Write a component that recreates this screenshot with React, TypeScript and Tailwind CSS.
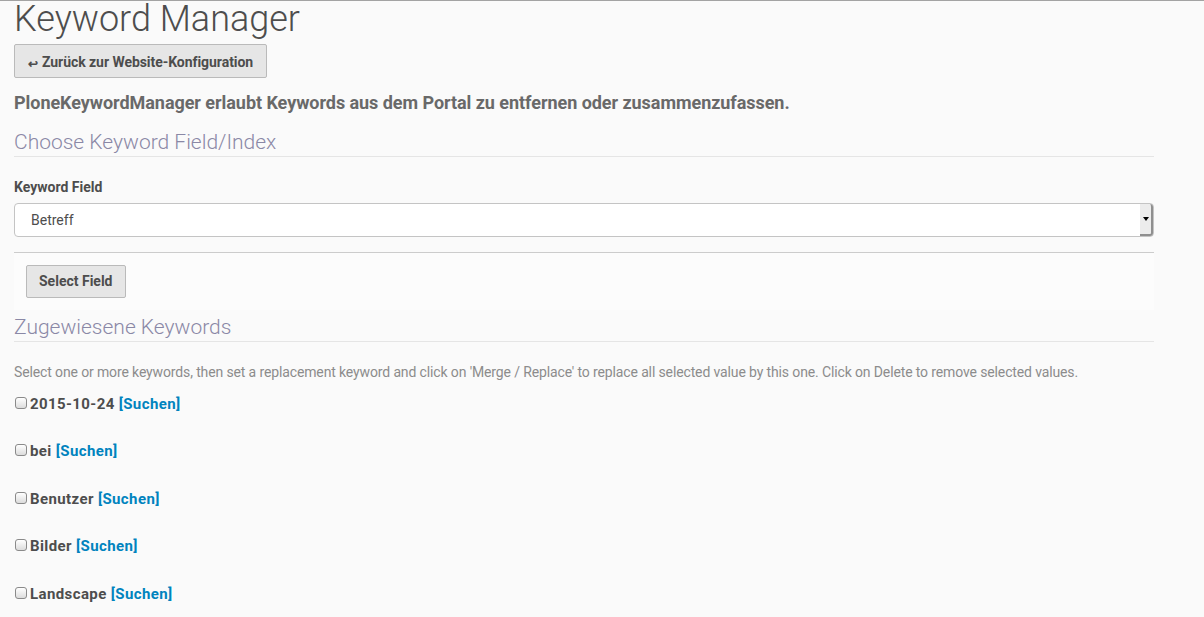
export default function App() {
  const keywords = ["2015-10-24", "bei", "Benutzer", "Bilder", "Landscape"];

  return (
    <div className="min-h-[617px] bg-[#fafafa] border-t border-[#a3a3a3] font-['Roboto',sans-serif] text-[#4d4d4d]">
      <div className="pl-[14px] w-[1154px]">
        <h1 className="text-[36px] leading-[36px] font-light text-[#4d4d4d]">Keyword Manager</h1>

        <button className="mt-[7px] h-[34px] pt-[2px] px-[13px] rounded-[2px] border border-[#bababa] bg-[#e6e6e6] text-[14px] font-bold tracking-[-0.05px] text-[#4d4d4d] flex items-center gap-[4px]">
          <span className="text-[12px] mt-[4px]">↩</span>
          <span>Zurück zur Website-Konfiguration</span>
        </button>

        <p className="mt-[13px] text-[18px] leading-[24px] font-bold tracking-[-0.05px] text-[#696969]">
          PloneKeywordManager erlaubt Keywords aus dem Portal zu entfernen oder zusammenzufassen.
        </p>

        <h2 className="mt-[15px] text-[21px] leading-[24px] font-light text-[#8a88a6] pb-[2px] border-b border-[#e5e5e5]">
          Choose Keyword Field/Index
        </h2>

        <div className="mt-[20px] text-[14px] leading-[20px] font-bold">Keyword Field</div>

        <div className="mt-[6px] h-[34px] rounded-[4px] border border-[#c4c4c4] bg-white flex items-center">
          <span className="flex-1 pl-[16px] text-[14px] text-[#4d4d4d]">Betreff</span>
          <div className="w-[13px] h-[32px] bg-[#ececec] border-r-2 border-b-2 border-[#8f8f8f] rounded-r-[3px] flex items-center justify-center">
            <div className="w-0 h-0 border-l-[3px] border-r-[3px] border-t-[4px] border-l-transparent border-r-transparent border-t-black" />
          </div>
        </div>

        <div className="mt-[15px] border-t border-[#cccccc] bg-[#fcfcfc] h-[58px] pt-[12px] pl-[12px]">
          <button className="h-[33px] px-[12px] rounded-[2px] border border-[#bababa] bg-[#e6e6e6] text-[14px] font-bold text-[#4d4d4d]">
            Select Field
          </button>
        </div>

        <h2 className="text-[21px] leading-[24px] font-light text-[#8a88a6] pt-[5px] pb-[2px] border-b border-[#e5e5e5]">
          Zugewiesene Keywords
        </h2>

        <p className="mt-[20px] text-[14px] leading-[20px] text-[#8c8c8c] tracking-[-0.13px]">
          Select one or more keywords, then set a replacement keyword and click on 'Merge / Replace' to replace all selected value by this one. Click on Delete to remove selected values.
        </p>

        <div className="mt-[12px] flex flex-col gap-[27.5px]">
          {keywords.map((k) => (
            <label key={k} className="flex items-center h-[20px] text-[15px] font-bold tracking-[0.4px]">
              <span className="ml-[1px] mr-[3px] mb-[3px] w-[12px] h-[12px] rounded-[3px] border border-[#8a8a8a] bg-gradient-to-b from-white to-[#dcdcdc]" />
              <span>{k}</span>
              <span className="ml-[4px] text-[#0083be]">[Suchen]</span>
            </label>
          ))}
        </div>
      </div>
    </div>
  );
}
